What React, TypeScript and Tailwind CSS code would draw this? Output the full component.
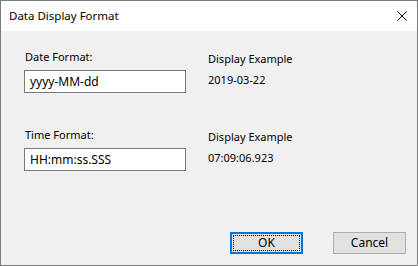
import React from 'react';

const font = { fontFamily: '"Noto Sans", "Open Sans", sans-serif' };

const Field = ({ label, value, example }: { label: string; value: string; example: string }) => (
  <div className="flex">
    <div className="w-[184px] flex flex-col">
      <div className="h-[16px] leading-[16px] pl-[1px]">{label}</div>
      <div className="mt-[5px] h-[23px] w-[162px] border border-[#7a7a7a] bg-white pl-[5px] leading-[21px] text-[12px]">
        {value}
      </div>
    </div>
    <div className="flex flex-col pt-[2px]">
      <div className="h-[16px] leading-[16px]">Display Example</div>
      <div className="mt-[5px] h-[16px] leading-[16px]">{example}</div>
    </div>
  </div>
);

export default function App() {
  return (
    <div
      className="w-[418px] h-[266px] border border-[#7a7a7a] flex flex-col text-[11px] text-black overflow-hidden"
      style={font}
    >
      {/* Title bar */}
      <div className="h-[30px] bg-white flex items-center justify-between pl-[8px] pr-[10px]">
        <span className="leading-[16px] text-[11.5px]">Data Display Format</span>
        <svg width="10" height="10" viewBox="0 0 10 10" className="mb-[1px]">
          <path d="M0.5 0.5 L9.5 9.5 M9.5 0.5 L0.5 9.5" stroke="#000" strokeWidth="1" />
        </svg>
      </div>

      {/* Body */}
      <div className="flex-1 bg-[#f0f0f0] flex flex-col pl-[23px] pt-[18px]">
        <Field label="Date Format:" value="yyyy-MM-dd" example="2019-03-22" />
        <div className="mt-[34px]">
          <Field label="Time Format:" value="HH:mm:ss.SSS" example="07:09:06.923" />
        </div>

        <div className="mt-auto mb-[11px] flex justify-end gap-[30px] pr-[11px]">
          <button className="w-[73px] h-[22px] border-2 border-[#0078d7] bg-[#e1e1e1] p-[1px]">
            <div className="h-full w-full border border-dotted border-black flex items-center justify-center leading-none text-[12px]">
              OK
            </div>
          </button>
          <button className="w-[73px] h-[22px] border border-[#adadad] bg-[#e1e1e1] flex items-center justify-center leading-none text-[12px]">
            Cancel
          </button>
        </div>
      </div>
    </div>
  );
}
